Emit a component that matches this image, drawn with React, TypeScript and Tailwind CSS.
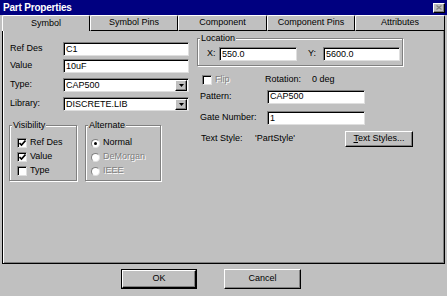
const raised =
  "bg-[#c0c0c0] border border-t-white border-l-white border-b-black border-r-black shadow-[inset_-1px_-1px_0_#808080]";
const sunken =
  "bg-white border border-t-[#808080] border-l-[#808080] border-b-[#dfdfdf] border-r-[#dfdfdf] shadow-[inset_1px_1px_0_#000]";
const disabledText = "text-[#808080] [text-shadow:1px_1px_0_#fff]";

function TextField({ width, value, combo }: { width: string; value: string; combo?: boolean }) {
  return (
    <div className={`${sunken} ${width} h-[14px] flex items-center pl-[2px] pr-[1px]`}>
      <span className="flex-1 truncate leading-none">{value}</span>
      {combo && (
        <div className={`${raised} w-[12px] h-[11px] flex items-center justify-center`}>
          <svg width="5" height="3" viewBox="0 0 5 3">
            <path d="M0 0h5L2.5 3z" fill="#000" />
          </svg>
        </div>
      )}
    </div>
  );
}

function Check({ label, checked, disabled }: { label: string; checked?: boolean; disabled?: boolean }) {
  return (
    <div className="h-[12px] flex items-center gap-[3px]">
      <div className={`${sunken} w-[10px] h-[10px] flex items-center justify-center ${disabled ? "bg-[#c0c0c0]" : ""}`}>
        {checked && (
          <svg width="7" height="7" viewBox="0 0 7 7">
            <path d="M0.5 3l2 2 4-4.5" stroke="#000" strokeWidth="1.6" fill="none" />
          </svg>
        )}
      </div>
      <span className={disabled ? disabledText : ""}>{label}</span>
    </div>
  );
}

function Radio({ label, on, disabled }: { label: string; on?: boolean; disabled?: boolean }) {
  return (
    <div className="h-[12px] flex items-center gap-[3px]">
      <div className="w-[9px] h-[9px] rounded-full bg-white border border-t-[#808080] border-l-[#808080] border-b-[#dfdfdf] border-r-[#dfdfdf] flex items-center justify-center">
        {on && <div className="w-[3px] h-[3px] rounded-full bg-black" />}
      </div>
      <span className={disabled ? disabledText : ""}>{label}</span>
    </div>
  );
}

function Group({ title, className, children }: { title: string; className: string; children: React.ReactNode }) {
  return (
    <div className={`relative border border-[#808080] shadow-[inset_1px_1px_0_#fff,1px_1px_0_#fff] ${className}`}>
      <span className="absolute -top-[6px] left-[2px] bg-[#c0c0c0] px-[1px] leading-[11px]">{title}</span>
      {children}
    </div>
  );
}

const tabs = [
  { label: "Symbol", w: "w-[88px]" },
  { label: "Symbol Pins", w: "w-[88px]" },
  { label: "Component", w: "w-[89px]" },
  { label: "Component Pins", w: "w-[88px]" },
  { label: "Attributes", w: "w-[90px]" },
];

export default function App() {
  return (
    <div className="w-[447px] h-[296px] bg-[#c0c0c0] flex flex-col overflow-hidden text-[9px] text-black font-['Liberation_Sans',Arial,sans-serif]">
      {/* title bar */}
      <div className="h-[15px] bg-[#000080] flex items-center justify-between pl-[3px] pr-[2px]">
        <span className="text-white font-bold text-[10px] tracking-[-0.2px]">Part Properties</span>
        <div className={`${raised} w-[12px] h-[10px] flex items-center justify-center`}>
          <svg width="6" height="5" viewBox="0 0 6 5">
            <path d="M0.5 0.5l5 4M5.5 0.5l-5 4" stroke="#808080" strokeWidth="1.2" />
          </svg>
        </div>
      </div>

      {/* tabs */}
      <div className="flex ml-[2px] h-[16px]">
        {tabs.map((t, i) => (
          <div
            key={t.label}
            className={`${t.w} h-[16px] flex items-center justify-center border-t border-l border-r border-t-white border-l-white border-r-black rounded-t-[2px] ${
              i === 0 ? "" : "border-b border-b-black"
            }`}
          >
            {t.label}
          </div>
        ))}
      </div>

      {/* panel */}
      <div className="ml-[2px] w-[443px] h-[233px] border-l border-r border-b border-black shadow-[inset_1px_0_0_#fff,inset_-1px_-1px_0_#808080] flex">
        <div className="w-[190px] pl-[7px] pt-[11px] flex flex-col">
          <div className="h-[14px] flex items-center">
            <span className="w-[53px]">Ref Des</span>
            <TextField width="w-[126px]" value="C1" />
          </div>
          <div className="h-[14px] flex items-center mt-[3px]">
            <span className="w-[53px]">Value</span>
            <TextField width="w-[126px]" value="10uF" />
          </div>
          <div className="h-[14px] flex items-center mt-[5px]">
            <span className="w-[53px]">Type:</span>
            <TextField width="w-[126px]" value="CAP500" combo />
          </div>
          <div className="h-[14px] flex items-center mt-[5px]">
            <span className="w-[53px]">Library:</span>
            <TextField width="w-[126px]" value="DISCRETE.LIB" combo />
          </div>

          <div className="flex gap-[8px] mt-[14px] -ml-[1px]">
            <Group title="Visibility" className="w-[68px] h-[56px] pt-[11px] pl-[7px] flex flex-col gap-[2px]">
              <Check label="Ref Des" checked />
              <Check label="Value" checked />
              <Check label="Type" />
            </Group>
            <Group title="Alternate" className="w-[76px] h-[56px] pt-[11px] pl-[5px] flex flex-col gap-[2px]">
              <Radio label="Normal" on />
              <Radio label="DeMorgan" disabled />
              <Radio label="IEEE" disabled />
            </Group>
          </div>
        </div>

        <div className="pl-[4px] pt-[7px] flex flex-col">
          <Group title="Location" className="w-[206px] h-[28px] pt-[8px] pl-[9px] flex items-start">
            <span className="w-[12px] h-[14px] flex items-center">X:</span>
            <TextField width="w-[78px]" value="550.0" />
            <span className="w-[15px] h-[14px] flex items-center ml-[11px]">Y:</span>
            <TextField width="w-[77px]" value="5600.0" />
          </Group>

          <div className="h-[12px] mt-[8px] pl-[5px] flex items-center">
            <div className="w-[63px]">
              <Check label="Flip" disabled />
            </div>
            <span className="w-[47px]">Rotation:</span>
            <span>0 deg</span>
          </div>

          <div className="h-[13px] mt-[4px] pl-[3px] flex items-center">
            <span className="w-[67px]">Pattern:</span>
            <TextField width="w-[98px]" value="CAP500" />
          </div>

          <div className="h-[14px] mt-[8px] pl-[3px] flex items-center">
            <span className="w-[67px]">Gate Number:</span>
            <TextField width="w-[98px]" value="1" />
          </div>

          <div className="h-[16px] mt-[6px] pl-[4px] flex items-center">
            <span className="w-[54px]">Text Style:</span>
            <span className="w-[90px]">'PartStyle'</span>
            <div className={`${raised} w-[68px] h-[16px] flex items-center justify-center`}>
              <span>
                <span className="underline">T</span>ext Styles...
              </span>
            </div>
          </div>
        </div>
      </div>

      {/* buttons */}
      <div className="flex pl-[121px] pt-[5px] gap-[27px]">
        <div className="w-[76px] h-[20px] border border-black">
          <div className={`${raised} w-full h-full flex items-center justify-center`}>OK</div>
        </div>
        <div className={`${raised} w-[77px] h-[20px] flex items-center justify-center`}>Cancel</div>
      </div>
    </div>
  );
}
